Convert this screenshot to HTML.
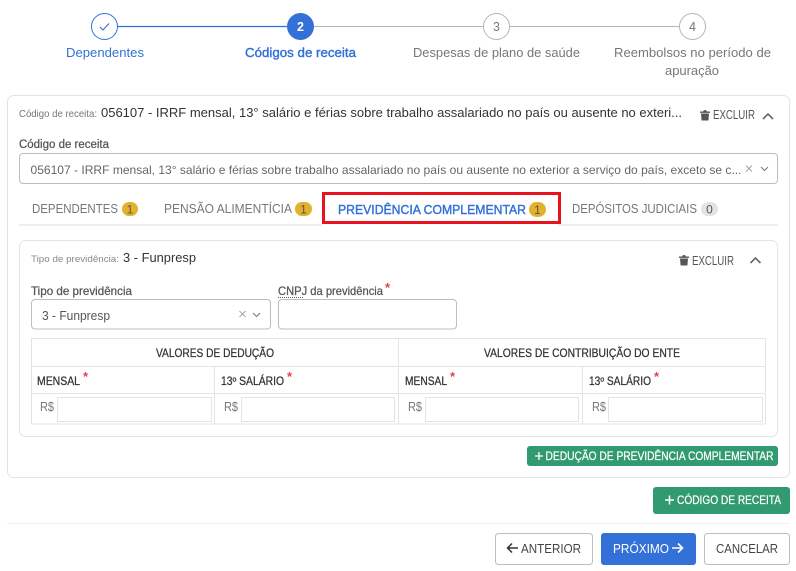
<!DOCTYPE html>
<html lang="pt-BR"><head><meta charset="utf-8"><title>Códigos de receita</title>
<style>
html,body{margin:0;padding:0;background:#fff;width:796px;height:571px;overflow:hidden}
svg{display:block;font-family:"Liberation Sans",sans-serif}
.m{stroke-width:.25}
.s{stroke-width:.4}
</style></head><body>
<svg width="796" height="571" viewBox="0 0 796 571" xmlns="http://www.w3.org/2000/svg">
<defs>
<g id="trash"><path d="M0 2h10v1.400H0zM3.200 2l.6-1.400h2.400L6.800 2zM1 4h8l-.6 7H1.600z" fill="#555"/></g>
</defs>
<!-- stepper -->
<line x1="118" y1="26.500" x2="287" y2="26.500" stroke="#3371d9" stroke-width="1.300"/>
<line x1="314" y1="26.500" x2="483" y2="26.500" stroke="#b5b5b5" stroke-width="1"/>
<line x1="510" y1="26.500" x2="679" y2="26.500" stroke="#b5b5b5" stroke-width="1"/>
<circle cx="104.500" cy="26.500" r="13" fill="#fff" stroke="#3371d9" stroke-width="1"/>
<path d="M100 27l3 3 6-6.500" fill="none" stroke="#3f66c4" stroke-width="1.100"/>
<circle cx="300.500" cy="26.500" r="13.500" fill="#3371d9"/>
<text x="300.500" y="31" text-anchor="middle" font-size="12.500" font-weight="700" fill="#fff">2</text>
<circle cx="496.500" cy="26.500" r="13" fill="#fff" stroke="#b5b5b5"/>
<text x="496.500" y="31" text-anchor="middle" font-size="12.500" fill="#777">3</text>
<circle cx="692.500" cy="26.500" r="13" fill="#fff" stroke="#b5b5b5"/>
<text x="692.500" y="31" text-anchor="middle" font-size="12.500" fill="#777">4</text>
<g font-size="13">
<text x="66" y="57" textLength="78" lengthAdjust="spacingAndGlyphs" fill="#3371d9">Dependentes</text>
<text x="245" y="57" textLength="111" lengthAdjust="spacingAndGlyphs" fill="#3371d9" stroke="#3371d9" class="s">Códigos de receita</text>
<text x="413" y="57" textLength="167" lengthAdjust="spacingAndGlyphs" fill="#777">Despesas de plano de saúde</text>
<text x="614" y="57" textLength="157" lengthAdjust="spacingAndGlyphs" fill="#777">Reembolsos no período de</text>
<text x="665" y="75" textLength="54" lengthAdjust="spacingAndGlyphs" fill="#777">apuração</text>
</g>
<!-- outer card -->
<rect x="7.500" y="95.500" width="782" height="382" rx="6" fill="#fff" stroke="#e4e4e4"/>
<text x="19" y="117" font-size="10" textLength="78" lengthAdjust="spacingAndGlyphs" fill="#777">Código de receita:</text>
<text x="101" y="117" font-size="13" textLength="581" lengthAdjust="spacingAndGlyphs" fill="#333">056107 - IRRF mensal, 13° salário e férias sobre trabalho assalariado no país ou ausente no exteri...</text>
<use href="#trash" x="700" y="109.500"/>
<text x="713" y="119" font-size="12.500" textLength="42" lengthAdjust="spacingAndGlyphs" fill="#555">EXCLUIR</text>
<path d="M763 119l5-5 5 5" fill="none" stroke="#666" stroke-width="1.600"/>
<text x="19" y="148" font-size="11.500" textLength="90" lengthAdjust="spacingAndGlyphs" fill="#555" stroke="#555" class="m">Código de receita</text>
<rect x="19.500" y="153.500" width="758" height="30" rx="3.500" fill="#fff" stroke="#bdbdbd"/>
<text x="30.500" y="174" font-size="12" textLength="711" lengthAdjust="spacingAndGlyphs" fill="#666">056107 - IRRF mensal, 13° salário e férias sobre trabalho assalariado no país ou ausente no exterior a serviço do país, exceto se c...</text>
<path d="M746 165.500l6 6M752 165.500l-6 6" stroke="#888" stroke-width=".8" fill="none"/>
<path d="M761 167l3.500 3.500 3.500-3.500" stroke="#777" stroke-width="1" fill="none"/>
<!-- tabs -->
<line x1="19" y1="225" x2="322" y2="225" stroke="#dcdcdc"/>
<line x1="558" y1="225" x2="778" y2="225" stroke="#dcdcdc"/>
<g font-size="12.500">
<text x="32" y="213" textLength="86" lengthAdjust="spacingAndGlyphs" fill="#777">DEPENDENTES</text>
<text x="164" y="213" textLength="128" lengthAdjust="spacingAndGlyphs" fill="#777">PENSÃO ALIMENTÍCIA</text>
<text x="338" y="214" textLength="188" lengthAdjust="spacingAndGlyphs" fill="#3371d9" stroke="#3371d9" class="s">PREVIDÊNCIA COMPLEMENTAR</text>
<text x="572" y="213" textLength="125" lengthAdjust="spacingAndGlyphs" fill="#777">DEPÓSITOS JUDICIAIS</text>
</g>
<g font-size="12" text-anchor="middle">
<rect x="122" y="202" width="16" height="14" rx="7" fill="#e3b22c"/><text x="130" y="213.500" fill="#555">1</text>
<rect x="295" y="202" width="17" height="14" rx="7" fill="#e3b22c"/><text x="303.500" y="213.500" fill="#555">1</text>
<rect x="529" y="202" width="17" height="15" rx="7.500" fill="#e3b22c"/><text x="537.500" y="214" fill="#555">1</text>
<rect x="701" y="202" width="17" height="14" rx="7" fill="#e4e4e4"/><text x="709.500" y="213.500" fill="#555">0</text>
</g>
<rect x="323.500" y="193.500" width="236" height="29" fill="none" stroke="#e8131f" stroke-width="3"/>
<!-- inner card -->
<rect x="19.500" y="240.500" width="758" height="196" rx="6" fill="#fff" stroke="#e4e4e4"/>
<text x="31" y="262" font-size="9.500" textLength="88" lengthAdjust="spacingAndGlyphs" fill="#888">Tipo de previdência:</text>
<text x="123" y="262" font-size="13" textLength="73" lengthAdjust="spacingAndGlyphs" fill="#333">3 - Funpresp</text>
<use href="#trash" x="679" y="254.500"/>
<text x="692" y="265" font-size="12.500" textLength="42" lengthAdjust="spacingAndGlyphs" fill="#555">EXCLUIR</text>
<path d="M750.500 263l5-5 5 5" fill="none" stroke="#666" stroke-width="1.600"/>
<text x="31" y="295" font-size="12" textLength="101" lengthAdjust="spacingAndGlyphs" fill="#555" stroke="#555" class="m">Tipo de previdência</text>
<text x="278" y="295" font-size="12" textLength="105" lengthAdjust="spacingAndGlyphs" fill="#555" stroke="#555" class="m">CNPJ da previdência</text>
<line x1="278" y1="297.500" x2="303" y2="297.500" stroke="#555" stroke-width="1" stroke-dasharray="1 1"/>
<text x="385" y="292" font-size="13" font-weight="700" fill="#e0434f">*</text>
<rect x="31.500" y="299.500" width="239" height="29.500" rx="3.500" fill="#fff" stroke="#bdbdbd"/>
<text x="42" y="320" font-size="12.500" textLength="68" lengthAdjust="spacingAndGlyphs" fill="#555">3 - Funpresp</text>
<path d="M239.500 311l6 6M245.500 311l-6 6" stroke="#888" stroke-width=".8" fill="none"/>
<path d="M253 313l3.500 3.500 3.500-3.500" stroke="#777" stroke-width="1" fill="none"/>
<rect x="278.500" y="299.500" width="178" height="29.500" rx="3.500" fill="#fff" stroke="#bdbdbd"/>
<!-- table -->
<g fill="none" stroke="#e4e4e4">
<rect x="31.500" y="338.500" width="734" height="85.500"/>
<line x1="31" y1="366.500" x2="766" y2="366.500"/>
<line x1="31" y1="393.500" x2="766" y2="393.500"/>
<line x1="214.500" y1="367" x2="214.500" y2="424"/>
<line x1="398.500" y1="338" x2="398.500" y2="424"/>
<line x1="582.500" y1="367" x2="582.500" y2="424"/>
<rect x="57.500" y="397.500" width="154" height="24"/>
<rect x="241.500" y="397.500" width="153" height="24"/>
<rect x="425.500" y="397.500" width="153" height="24"/>
<rect x="608.500" y="397.500" width="154" height="24"/>
</g>
<g font-size="11.500" fill="#333" stroke="#333" class="m">
<text x="156" y="357" textLength="118" lengthAdjust="spacingAndGlyphs">VALORES DE DEDUÇÃO</text>
<text x="484" y="357" textLength="196" lengthAdjust="spacingAndGlyphs">VALORES DE CONTRIBUIÇÃO DO ENTE</text>
<text x="37" y="385" textLength="43" lengthAdjust="spacingAndGlyphs">MENSAL</text>
<text x="221" y="385" textLength="63" lengthAdjust="spacingAndGlyphs">13º SALÁRIO</text>
<text x="405" y="385" textLength="42" lengthAdjust="spacingAndGlyphs">MENSAL</text>
<text x="589" y="385" textLength="62" lengthAdjust="spacingAndGlyphs">13º SALÁRIO</text>
</g>
<g font-size="13" font-weight="700" fill="#e0434f">
<text x="83" y="381">*</text><text x="287" y="381">*</text><text x="450" y="381">*</text><text x="654" y="381">*</text>
</g>
<g font-size="12.500" fill="#777">
<text x="40" y="411" textLength="14" lengthAdjust="spacingAndGlyphs">R$</text>
<text x="224" y="411" textLength="14" lengthAdjust="spacingAndGlyphs">R$</text>
<text x="408" y="411" textLength="14" lengthAdjust="spacingAndGlyphs">R$</text>
<text x="592" y="411" textLength="14" lengthAdjust="spacingAndGlyphs">R$</text>
</g>
<!-- green buttons -->
<rect x="527" y="446" width="251" height="20" rx="3" fill="#329a71"/>
<path d="M535 456h8M539 452v8" stroke="#fff" stroke-width="1.300"/>
<text x="545.500" y="460" font-size="12" textLength="228" lengthAdjust="spacingAndGlyphs" fill="#fff" stroke="#fff" class="m">DEDUÇÃO DE PREVIDÊNCIA COMPLEMENTAR</text>
<rect x="653" y="487" width="137" height="27" rx="3" fill="#329a71"/>
<path d="M665 500h9M669.500 495.500v9" stroke="#fff" stroke-width="1.500"/>
<text x="677" y="504" font-size="12" textLength="104" lengthAdjust="spacingAndGlyphs" fill="#fff" stroke="#fff" class="m">CÓDIGO DE RECEITA</text>
<line x1="7" y1="523.500" x2="790" y2="523.500" stroke="#f0f0f0"/>
<!-- footer buttons -->
<rect x="495.500" y="533.500" width="97" height="31" rx="3" fill="#fff" stroke="#bdbdbd"/>
<path d="M518 548h-10.500M512 543.500l-4.500 4.500 4.500 4.500" fill="none" stroke="#333" stroke-width="1.500"/>
<text x="521" y="553" font-size="12.500" textLength="60" lengthAdjust="spacingAndGlyphs" fill="#444">ANTERIOR</text>
<rect x="601" y="533" width="95" height="32" rx="3" fill="#3371d9"/>
<text x="613" y="553" font-size="12.500" textLength="56" lengthAdjust="spacingAndGlyphs" fill="#fff">PRÓXIMO</text>
<path d="M672 548h10.500M678 543.500l4.500 4.500-4.500 4.500" fill="none" stroke="#fff" stroke-width="1.600"/>
<rect x="704.500" y="533.500" width="85" height="31" rx="3" fill="#fff" stroke="#bdbdbd"/>
<text x="716" y="553" font-size="12.500" textLength="62" lengthAdjust="spacingAndGlyphs" fill="#444">CANCELAR</text>
</svg>
</body></html>
